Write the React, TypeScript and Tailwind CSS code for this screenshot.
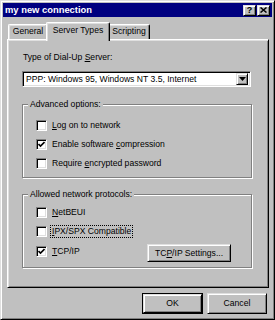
import React from 'react'

const raised =
  'border border-t-[#dfdfdf] border-l-[#dfdfdf] border-r-black border-b-black shadow-[inset_1px_1px_#fff,inset_-1px_-1px_#808080]'
const sunken =
  'border border-t-[#808080] border-l-[#808080] border-r-white border-b-white shadow-[inset_1px_1px_#000,inset_-1px_-1px_#dfdfdf]'
const etched = 'border border-[#808080] shadow-[1px_1px_0_#fff,inset_1px_1px_0_#fff]'

function U({ children }: { children: React.ReactNode }) {
  return <span className="underline underline-offset-[1px]">{children}</span>
}

function Check({ checked, children, focus }: { checked?: boolean; children: React.ReactNode; focus?: boolean }) {
  return (
    <div className="flex items-center h-[19px] gap-[4px]">
      <span className={`w-[11px] h-[11px] bg-white flex items-center justify-center ${sunken}`}>
        {checked && (
          <svg width="7" height="7" viewBox="0 0 7 7">
            <path d="M0.5 3 L2.5 5 L6.5 1" stroke="#000" strokeWidth="1.6" fill="none" />
          </svg>
        )}
      </span>
      <span className={`px-[1px] leading-[11px] ${focus ? 'outline outline-1 outline-dotted outline-black' : ''}`}>
        {children}
      </span>
    </div>
  )
}

function Tab({ active, children, w }: { active?: boolean; children: React.ReactNode; w: string }) {
  return (
    <div
      className={`${w} flex items-start justify-center border-t border-l border-r border-t-white border-l-white border-r-black rounded-t-[2px] shadow-[inset_-1px_0_#808080,inset_1px_1px_#dfdfdf] bg-[#c0c0c0] ${
        active ? 'h-[19px] -mb-[2px] pt-[2px] relative z-10 -mx-[2px]' : 'h-[15px] pt-[1px]'
      }`}
    >
      <span className="leading-[11px]">{children}</span>
    </div>
  )
}

export default function App() {
  return (
    <div className="w-[275px] h-[320px] bg-[#c0c0c0] font-['Liberation_Sans',Arial,sans-serif] text-[8.6px] text-black border border-t-[#dfdfdf] border-l-[#dfdfdf] border-r-black border-b-black shadow-[inset_1px_1px_#fff,inset_-1px_-1px_#808080] p-[2px] flex flex-col">
      {/* title bar */}
      <div className="h-[14px] bg-[#000080] flex items-center pl-[2px] pr-[2px]">
        <span className="text-white font-bold text-[9.4px] leading-[12px] flex-1">my new connection</span>
        <div className="flex gap-[1px]">
          <span className={`w-[13px] h-[11px] bg-[#c0c0c0] flex items-center justify-center text-[9px] font-bold leading-none ${raised}`}>?</span>
          <span className={`w-[13px] h-[11px] bg-[#c0c0c0] flex items-center justify-center ${raised}`}>
            <svg width="7" height="6" viewBox="0 0 7 6">
              <path d="M0.5 0.5 L6.5 5.5 M6.5 0.5 L0.5 5.5" stroke="#000" strokeWidth="1.5" />
            </svg>
          </span>
        </div>
      </div>

      <div className="flex-1 flex flex-col pl-[4px] pr-[3px] pt-[5px]">
        {/* tabs */}
        <div className="flex items-end h-[17px] pl-[1px]">
          <Tab w="w-[40px]">General</Tab>
          <Tab w="w-[64px]" active>Server Types</Tab>
          <Tab w="w-[42px]">Scripting</Tab>
        </div>

        {/* panel */}
        <div className="h-[249px] border border-t-white border-l-white border-r-black border-b-black shadow-[inset_1px_1px_#dfdfdf,inset_-1px_-1px_#808080] pl-[14px] pt-[12px] flex flex-col">
          <div className="leading-[11px] pl-[1px]">
            Type of Dial-Up <U>S</U>erver:
          </div>
          <div className={`mt-[8px] w-[229px] h-[16px] bg-white flex items-center pl-[3px] pr-[2px] ${sunken}`}>
            <span className="flex-1 leading-[11px]">PPP: Windows 95, Windows NT 3.5, Internet</span>
            <span className={`w-[12px] h-[12px] bg-[#c0c0c0] flex items-center justify-center ${raised}`}>
              <svg width="7" height="4" viewBox="0 0 7 4">
                <path d="M0 0 H7 L3.5 4 Z" fill="#000" />
              </svg>
            </span>
          </div>

          <div className={`relative mt-[17px] w-[230px] h-[74px] ${etched} pl-[13px] pt-[11px]`}>
            <span className="absolute -top-[6px] left-[5px] px-[2px] bg-[#c0c0c0] leading-[11px]">Advanced options:</span>
            <Check><U>L</U>og on to network</Check>
            <Check checked>Enable software <U>c</U>ompression</Check>
            <Check>Require <U>e</U>ncrypted password</Check>
          </div>

          <div className={`relative mt-[16px] w-[230px] h-[74px] ${etched} pl-[13px] pt-[8px]`}>
            <span className="absolute -top-[6px] left-[5px] px-[2px] bg-[#c0c0c0] leading-[11px]">Allowed network protocols:</span>
            <Check><U>N</U>etBEUI</Check>
            <Check focus><U>I</U>PX/SPX Compatible</Check>
            <div className="flex items-center">
              <div className="w-[111px]">
                <Check checked><U>T</U>CP/IP</Check>
              </div>
              <span className={`w-[84px] h-[18px] bg-[#c0c0c0] flex items-center justify-center leading-[11px] mt-[3px] ${raised}`}>
                TC<U>P</U>/IP Settings...
              </span>
            </div>
          </div>
        </div>

        {/* bottom buttons */}
        <div className="flex justify-end gap-[4px] mt-[5px] pr-[2px]">
          <span className="w-[61px] h-[21px] border border-black">
            <span className={`w-full h-full bg-[#c0c0c0] flex items-center justify-center leading-[11px] ${raised}`}>OK</span>
          </span>
          <span className={`w-[60px] h-[21px] bg-[#c0c0c0] flex items-center justify-center leading-[11px] ${raised}`}>Cancel</span>
        </div>
      </div>
    </div>
  )
}
